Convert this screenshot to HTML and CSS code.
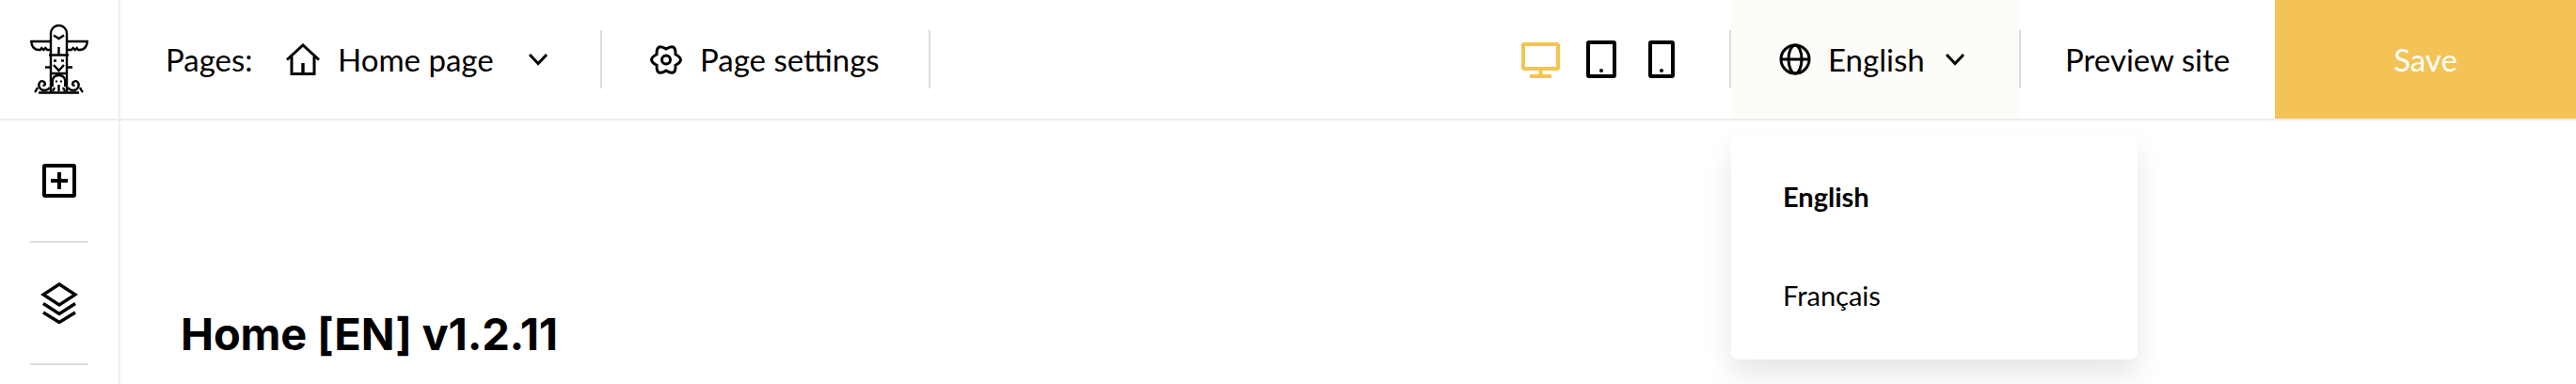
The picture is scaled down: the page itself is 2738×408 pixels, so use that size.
FILE: index.html
```html
<!DOCTYPE html>
<html lang="en">
<head>
    <meta charset="UTF-8">
    <title>Page editor</title>
    <link rel="stylesheet" href="styles.css">
</head>
<body>
<div class="topbar">
    <div class="logo">
        <svg width="62" height="74" viewBox="0 0 62 74" fill="none" stroke="#000" stroke-width="2.4">
            <path d="M22 72V9.500a8.500 8.500 0 0 1 17 0V72"/>
            <path d="M25 11.500l5.500 3.500 5.500-3.500"/>
            <path d="M22 18H1.300c0 5 3 9 8 9h1.500l1.500-2 2 2 2-2 2 2H22M39 18h21.700c0 5-3 9-8 9h-1.500l-1.500-2-2 2-2-2-2 2H39"/>
            <path d="M30.500 24v8M20 32.500h21M22 52h17"/>
            <path d="M25 38.500h3M33 38.500h3M25 43l5.500 6 5.500-6"/>
            <path d="M16 45.500h6M39 45.500h6"/>
            <path d="M24 66c-1-7 0-12 6.500-12S38 59 37 66M30.500 64v7M26 67l-2 4M35 67l2 4"/>
            <path d="M27 60.500h2M32 60.500h2" stroke-width="2"/>
            <path d="M21 67c-3 4-9 4-11 0s1-8 4-6.500 2 5-.5 4M40 67c3 4 9 4 11 0s-1-8-4-6.500-2 5 .5 4"/>
            <path d="M9 72.500h43M8 67c-1 2-2 4-3 5M53 67c1 2 2 4 3 5"/>
        </svg>
    </div>
    <div class="page-nav">
        <span class="pages-label">Pages:</span>
        <svg class="home-icon" width="36" height="34" viewBox="0 0 36 34" fill="none" stroke="#000" stroke-width="3">
            <path d="M1 17.500 18 2l17 15.500M6 14v18.500h24V14"/>
            <path d="M18 32.500V21" stroke-width="3.400"/>
        </svg>
        <span class="nav-text">Home page</span>
        <svg class="chevron" width="22" height="14" viewBox="0 0 22 14" fill="none" stroke="#000" stroke-width="3"><path d="m2 2 9 9.500L20 2"/></svg>
    </div>
    <div class="divider"></div>
    <div class="settings">
        <svg width="34" height="33" viewBox="0 0 34 33" fill="none" stroke="#000" stroke-width="3">
            <path d="M26.960 10.750Q38 16.500 26.960 22.250 27.500 34.690 17 28 6.500 34.690 7.040 22.250-4 16.500 7.040 10.750 6.500-1.690 17 5 27.500-1.690 26.960 10.750Z"/>
            <circle cx="17" cy="16.500" r="4.500"/>
        </svg>
        <span class="nav-text">Page settings</span>
    </div>
    <div class="divider"></div>

    <div class="devices">
        <svg class="desktop" width="41" height="38" viewBox="0 0 41 38" fill="none" stroke="#f3c455" stroke-width="4">
            <rect x="2" y="2" width="37" height="26" rx="1"/>
            <path d="M20.500 28v6M9 36h23"/>
        </svg>
        <svg class="tablet" width="32" height="40" viewBox="0 0 32 40" fill="none" stroke="#000" stroke-width="4">
            <rect x="2" y="2" width="28" height="36" rx="1"/>
            <circle cx="16" cy="32" r="2" fill="#000" stroke="none"/>
        </svg>
        <svg width="28" height="40" viewBox="0 0 28 40" fill="none" stroke="#000" stroke-width="4">
            <rect x="2" y="2" width="24" height="36" rx="1"/>
            <circle cx="14" cy="32" r="2" fill="#000" stroke="none"/>
        </svg>
    </div>
    <div class="divider"></div>
    <div class="lang">
        <svg width="34" height="34" viewBox="0 0 34 34" fill="none" stroke="#000" stroke-width="3">
            <circle cx="17" cy="17" r="15"/>
            <ellipse cx="17" cy="17" rx="7" ry="15"/>
            <path d="M2 17h30"/>
        </svg>
        <span class="nav-text">English</span>
        <svg class="chevron" width="22" height="14" viewBox="0 0 22 14" fill="none" stroke="#000" stroke-width="3"><path d="m2 2 9 9.500L20 2"/></svg>
    </div>
    <div class="divider"></div>
    <div class="preview">Preview site</div>
    <button class="save">Save</button>

    <ul class="lang-menu">
        <li class="active">English</li>
        <li>Français</li>
    </ul>
</div>
<div class="workspace">
    <div class="sidebar">
        <div class="tool">
            <svg width="36" height="36" viewBox="0 0 36 36" fill="none" stroke="#000" stroke-width="4">
                <rect x="2" y="2" width="32" height="32" rx="1"/>
                <path d="M18 9v18M9 18h18"/>
            </svg>
        </div>
        <div class="tool">
            <svg width="40" height="44" viewBox="0 0 40 44" fill="none" stroke="#000" stroke-width="3.400">
                <path d="M20 2 37 13 20 24 3 13Z"/>
                <path d="m3 22.500 17 11 17-11M3 32l17 10.500L37 32"/>
            </svg>
        </div>
    </div>
    <div class="main">
        <h1>Home [EN] v1.2.11</h1>
    </div>
</div>
</body>
</html>
```

FILE: styles.css
```css
html, body{
    margin: 0;
    height: 100%;
    overflow: hidden;
    background-color: #fff;
    color: #000;
    font-family: "Lato", "Noto Sans", sans-serif;
}
svg{
    display: block;
    flex-shrink: 0;
}
.topbar{
    position: relative;
    display: flex;
    align-items: center;
    height: 126px;
    border-bottom: 2px solid #eee;
    font-size: 33px;
}
.logo{
    display: flex;
    align-items: center;
    justify-content: center;
    align-self: stretch;
    width: 126px;
    border-right: 2px solid #eee;
}
.page-nav{
    display: flex;
    align-items: center;
    padding-left: 48px;
    width: 510px;
    box-sizing: border-box;
}
.pages-label{
    width: 128px;
}
.home-icon{
    margin-right: 19px;
}
.chevron{
    margin-left: 36px;
}
.divider{
    width: 2px;
    height: 62px;
    background-color: #ddd;
    flex-shrink: 0;
}
.settings{
    display: flex;
    align-items: center;
    gap: 19px;
    padding-left: 51px;
    width: 347px;
    box-sizing: border-box;
}
.devices{
    display: flex;
    align-items: center;
    margin-left: auto;
    margin-right: 58px;
}
.desktop{
    margin-top: 2px;
    margin-right: 28px;
}
.tablet{
    margin-right: 34px;
}
.lang{
    display: flex;
    align-items: center;
    align-self: stretch;
    width: 306px;
    padding-left: 51px;
    box-sizing: border-box;
    background-color: #fdfcf8;
}
.lang .nav-text{
    margin-left: 18px;
}
.lang .chevron{
    margin-left: 21px;
}
.preview{
    width: 270px;
    padding-left: 47px;
    box-sizing: border-box;
}
.save{
    align-self: stretch;
    width: 320px;
    border: 0;
    padding: 0;
    background-color: #f3c455;
    color: #fff;
    font: inherit;
}
.lang-menu{
    position: absolute;
    top: 143px;
    left: 1840px;
    width: 432px;
    height: 239px;
    margin: 0;
    padding: 0;
    list-style: none;
    background-color: #fff;
    border-radius: 8px;
    box-shadow: 0 16px 30px rgba(0, 0, 0, .1);
    font-size: 29px;
    display: flex;
    flex-direction: column;
    justify-content: center;
    gap: 69px;
    padding-left: 55px;
    padding-bottom: 2px;
    box-sizing: border-box;
}
.lang-menu li{
    line-height: 36px;
}
.lang-menu .active{
    font-weight: 700;
}
.workspace{
    display: flex;
    height: 280px;
}
.sidebar{
    width: 126px;
    border-right: 2px solid #eee;
    flex-shrink: 0;
}
.tool{
    display: flex;
    align-items: center;
    justify-content: center;
    height: 128px;
    margin: 0 32px;
    border-bottom: 2px solid #ddd;
}
.main{
    padding: 199px 0 0 64px;
}
h1{
    margin: 0;
    font-family: "Inter", "Liberation Sans", sans-serif;
    font-size: 47px;
    line-height: 56px;
    font-weight: 700;
    letter-spacing: -0.2px;
}
```
